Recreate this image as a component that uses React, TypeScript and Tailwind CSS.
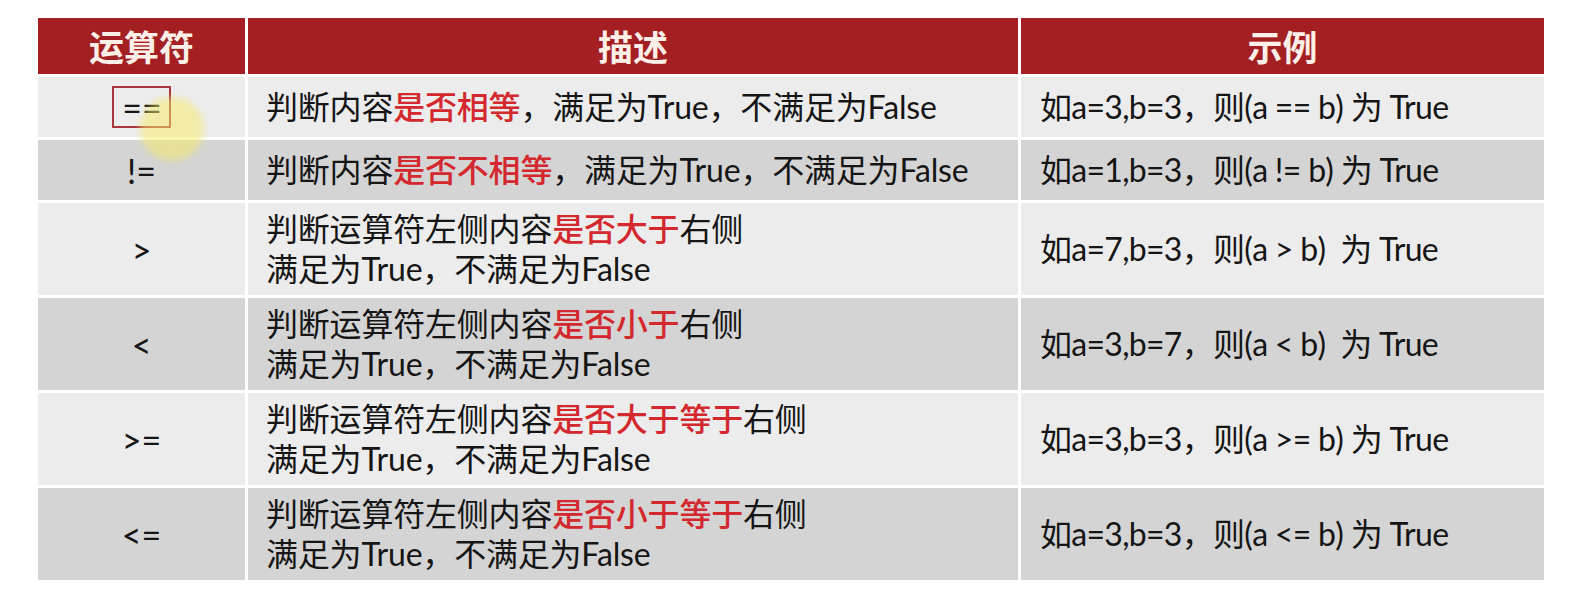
const fontStack = "font-['Lato','Noto_Sans_CJK_SC',sans-serif]";

type Row = {
  op: string;
  before: string;
  red: string;
  after: string;
  second?: string;
  example: string;
  tall: boolean;
};

const rows: Row[] = [
  { op: "==", before: "判断内容", red: "是否相等", after: "，满足为True，不满足为False", example: "如a=3,b=3，则(a == b) 为 True", tall: false },
  { op: "!=", before: "判断内容", red: "是否不相等", after: "，满足为True，不满足为False", example: "如a=1,b=3，则(a != b) 为 True", tall: false },
  { op: ">", before: "判断运算符左侧内容", red: "是否大于", after: "右侧", second: "满足为True，不满足为False", example: "如a=7,b=3，则(a > b)  为 True", tall: true },
  { op: "<", before: "判断运算符左侧内容", red: "是否小于", after: "右侧", second: "满足为True，不满足为False", example: "如a=3,b=7，则(a < b)  为 True", tall: true },
  { op: ">=", before: "判断运算符左侧内容", red: "是否大于等于", after: "右侧", second: "满足为True，不满足为False", example: "如a=3,b=3，则(a >= b) 为 True", tall: true },
  { op: "<=", before: "判断运算符左侧内容", red: "是否小于等于", after: "右侧", second: "满足为True，不满足为False", example: "如a=3,b=3，则(a <= b) 为 True", tall: true },
];

export default function App() {
  return (
    <div className={`h-[599px] w-[1574px] bg-white pt-[18px] pl-[38px] text-[#151515] ${fontStack}`}>
      <div className="grid w-[1506px] grid-cols-[207px_770px_523px] gap-[3px]">
        {["运算符", "描述", "示例"].map((title) => (
          <div
            key={title}
            className="flex h-[56px] items-center justify-center bg-[#a31f22] font-['Noto_Sans_CJK_SC',sans-serif] text-[35px] font-bold text-[#fbefe8]"
          >
            {title}
          </div>
        ))}

        {rows.map((row, index) => {
          const bg = index % 2 === 0 ? "bg-[#ececec]" : "bg-[#d4d4d4]";
          const height = row.tall ? "h-[92px]" : "h-[60px]";

          return (
            <div key={row.op} className="contents">
              <div className={`relative flex items-center justify-center text-[34px] ${bg} ${height}`}>
                {index === 0 ? (
                  <>
                    <span className="flex h-[42px] w-[59px] items-center justify-center border-2 border-[#a8343e] pl-[1px]">
                      ==
                    </span>
                    {/* cursor highlight */}
                    <span className="pointer-events-none absolute top-[20px] left-[102px] z-10 h-[64px] w-[64px] rounded-full bg-[rgba(248,236,100,0.5)] blur-[3px]" />
                  </>
                ) : (
                  <span>{row.op}</span>
                )}
              </div>

              <div className={`flex flex-col justify-center pl-[18px] text-[32px] leading-[40px] tracking-[-0.2px] ${bg} ${height}`}>
                <p className="whitespace-pre">
                  {row.before}
                  <span className="font-medium text-[#d3282d]">{row.red}</span>
                  {row.after}
                </p>
                {row.second ? <p className="whitespace-pre">{row.second}</p> : null}
              </div>

              <div className={`flex items-center pl-[19px] text-[32px] tracking-[-0.7px] ${bg} ${height}`}>
                <p className="whitespace-pre">{row.example}</p>
              </div>
            </div>
          );
        })}
      </div>
    </div>
  );
}
